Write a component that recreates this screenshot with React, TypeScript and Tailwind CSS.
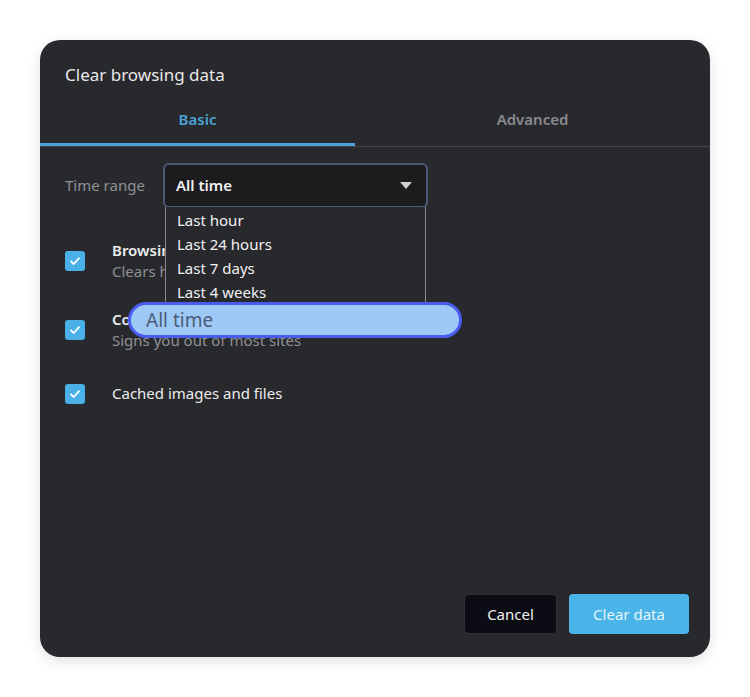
import React from "react";

function Check() {
  return (
    <div className="w-[20px] h-[20px] rounded-[3px] bg-[#4ab0e8] flex items-center justify-center shrink-0">
      <svg width="14" height="14" viewBox="0 0 14 14" fill="none">
        <path d="M3 7.3 L5.8 10 L11 4.2" stroke="#ffffff" strokeWidth="1.8" strokeLinecap="round" strokeLinejoin="round" />
      </svg>
    </div>
  );
}

export default function App() {
  return (
    <div className="w-[750px] h-[697px] bg-white p-[40px]" style={{ fontFamily: '"Noto Sans", "Open Sans", sans-serif' }}>
      <div className="relative w-[670px] h-[617px] rounded-[20px] bg-[#28292d] shadow-[0_4px_14px_rgba(0,0,0,0.12)] flex flex-col">
        <div className="pl-[25px] pt-[24px] text-[17px] leading-[22px] text-[#e8e8e8]">Clear browsing data</div>
        <div className="flex mt-[20px] border-b border-[#45464b]">
          <div className="w-[315px] h-[40px] flex items-start justify-center text-[15px] font-semibold text-[#4aa3d6] border-b-[3px] border-[#4aa3d6] -mb-[1px] pt-[2px]">Basic</div>
          <div className="flex-1 h-[40px] flex items-start justify-center text-[15px] font-semibold text-[#8a8b8f] pt-[2px]">Advanced</div>
        </div>
        <div className="flex items-center mt-[16px] pl-[25px]">
          <div className="w-[98px] text-[15px] text-[#8f9094]">Time range</div>
          <div className="w-[265px] h-[45px] rounded-[6px] bg-[#1c1c1f] border-2 border-[#4b5a78] flex items-center justify-between pl-[11px] pr-[14px]">
            <span className="text-[15px] font-semibold text-[#f2f2f2]">All time</span>
            <svg width="12" height="7" viewBox="0 0 12 7"><path d="M0 0 L12 0 L6 7 Z" fill="#d0d0d0" /></svg>
          </div>
        </div>
        <div className="flex flex-col mt-[32px] pl-[25px]">
          <div className="flex items-center gap-[27px]">
            <Check />
            <div className="flex flex-col">
              <span className="text-[15px] font-semibold leading-[21px] text-[#ececec]">Browsing history</span>
              <span className="text-[15px] leading-[21px] text-[#8f9094]">Clears history and autocompletions</span>
            </div>
          </div>
          <div className="flex items-center gap-[27px] mt-[27px]">
            <Check />
            <div className="flex flex-col">
              <span className="text-[15px] font-semibold leading-[21px] text-[#ececec]">Cookies and other site data</span>
              <span className="text-[15px] leading-[21px] text-[#8f9094]">Signs you out of most sites</span>
            </div>
          </div>
          <div className="flex items-center gap-[27px] mt-[32px]">
            <Check />
            <span className="text-[15px] leading-[21px] text-[#ececec]">Cached images and files</span>
          </div>
        </div>
        <div className="flex-1" />
        <div className="flex justify-end gap-[12px] pr-[21px] pb-[23px]">
          <button className="w-[93px] h-[40px] rounded-[4px] bg-[#0c0d14] border border-[#2f3139] text-[15px] text-[#f0f0f0]">Cancel</button>
          <button className="w-[120px] h-[40px] rounded-[4px] bg-[#4ab3e8] text-[15px] text-[#e6f4fb]">Clear data</button>
        </div>

        <div className="absolute left-[125px] top-[167px] w-[261px] h-[96px] bg-[#28292d] border border-t-0 border-[#8a8a8e] flex flex-col pl-[11px] pt-[1px]">
          <span className="text-[15px] leading-[24px] text-[#f2f2f2]">Last hour</span>
          <span className="text-[15px] leading-[24px] text-[#f2f2f2]">Last 24 hours</span>
          <span className="text-[15px] leading-[24px] text-[#f2f2f2]">Last 7 days</span>
          <span className="text-[15px] leading-[24px] text-[#f2f2f2]">Last 4 weeks</span>
        </div>
        <div className="absolute left-[88px] top-[262px] w-[334px] h-[36px] rounded-full bg-[#9ec9f7] border-[3px] border-[#4a5cf0] flex items-center pl-[15px]">
          <span className="text-[19px] text-[#4b5c78]">All time</span>
        </div>
      </div>
    </div>
  );
}
